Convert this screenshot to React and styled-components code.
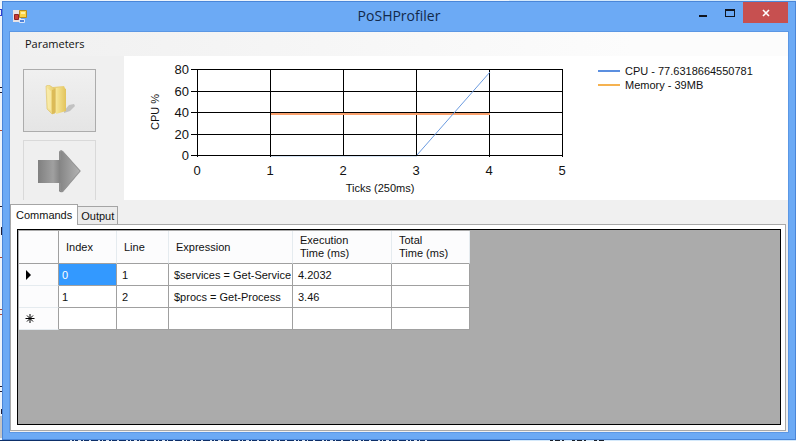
import React, { useState } from "react";
import styled, { createGlobalStyle } from "styled-components";

const GlobalStyle = createGlobalStyle`
  * { box-sizing: border-box; }
  body { margin: 0; font: 11px/14px "Liberation Sans", Arial, sans-serif; color: #111; }
  button { font: inherit; color: inherit; }
`;

const Desktop = styled.div`
  position: relative;
  min-height: 100vh;
  display: flex;
  flex-direction: column;
  padding: 1px 0 1px 2px;
  background: linear-gradient(to right, #eef4fb 0 64%, #d4e9fb 64%);
`;

const Backdrop = styled.svg`
  position: absolute;
  left: 0;
  top: 0;
  width: 100%;
  height: 100%;
`;

const Window = styled.main`
  position: relative;
  flex: 1;
  display: flex;
  flex-direction: column;
  padding: 0 7px 7px;
  background: #6caaf5;
  border: 1px solid #4a86d8;
`;

const TitleBar = styled.header`
  height: 30px;
  flex: none;
  display: grid;
  grid-template-columns: 1fr auto 1fr;
  align-items: start;
`;

const AppIcon = styled.svg`
  width: 16px;
  height: 16px;
  margin: 6px 0 0 3px;
`;

const Title = styled.h1`
  margin: 4px 0 0;
  font: 14px/20px "Open Sans", sans-serif;
  color: #12294a;
`;

const Controls = styled.div`
  display: flex;
  justify-content: flex-end;
`;

const ControlButton = styled.button`
  width: ${(p) => (p.$close ? 45 : 27)}px;
  height: 21px;
  padding: 0;
  border: 0;
  display: grid;
  place-items: center;
  background: ${(p) => (p.$close ? "#c75050" : "transparent")};
`;

const Client = styled.div`
  flex: 1;
  display: flex;
  flex-direction: column;
  background: #f0f0f0;
  outline: 1px solid #5b97e4;
`;

const MenuBar = styled.nav`
  height: 24px;
  flex: none;
  padding: 2px 10px;
  background: linear-gradient(to right, #f0f0f0, #fcfcfc 80%);
`;

const MenuItem = styled.button`
  height: 20px;
  padding: 0 5px;
  border: 0;
  background: transparent;
  font: 11px/20px "Open Sans", sans-serif;
`;

const TopPanel = styled.section`
  height: 144px;
  flex: none;
  display: flex;
  overflow: hidden;
`;

const Tools = styled.div`
  width: 114px;
  flex: none;
  display: flex;
  flex-direction: column;
  gap: 8px;
  padding: 13px 28px 0 13px;
`;

const ToolButton = styled.button`
  height: 63px;
  flex: none;
  padding: 0;
  display: grid;
  place-items: center;
  border: 1px solid #acacac;
  background: linear-gradient(#f0f0f0, #e5e5e5);
  &:disabled { border-color: #d9d9d9; background: #efefef; }
`;

const ChartPanel = styled.div`
  flex: 1;
  display: flex;
  background: #fff;
`;

const Plot = styled.svg`
  width: 456px;
  height: 144px;
  flex: none;
  font-family: "Liberation Sans", Arial, sans-serif;
`;

const Legend = styled.ul`
  list-style: none;
  margin: 8px 0 0 18px;
  padding: 0;
`;

const LegendItem = styled.li`
  display: flex;
  align-items: center;
  gap: 5px;
  white-space: nowrap;
  &::before {
    content: "";
    width: 22px;
    height: 2px;
    background: ${(p) => p.$color};
  }
`;

const TabList = styled.div`
  flex: none;
  display: flex;
  align-items: flex-end;
  padding-top: 4px;
`;

const Tab = styled.button`
  position: relative;
  height: ${(p) => (p.$active ? 21 : 18)}px;
  padding: 0 ${(p) => (p.$active ? 5 : 3)}px;
  border: 1px solid #a5a5a5;
  border-bottom: 0;
  border-left-width: ${(p) => (p.$active ? 1 : 0)}px;
  margin-bottom: ${(p) => (p.$active ? -1 : 0)}px;
  background: ${(p) => (p.$active ? "#fff" : "#ececec")};
`;

const TabPage = styled.div`
  flex: 1;
  display: flex;
  margin: 0 2px 1px 0;
  padding: 4px 4px 5px 6px;
  background: #fff;
  border: 1px solid #a9a9a9;
`;

const GridView = styled.div`
  flex: 1;
  padding: 1px;
  background: #ababab;
  border: 1px solid #000;
`;

const Table = styled.table`
  width: 451px;
  table-layout: fixed;
  border-collapse: separate;
  border-spacing: 0;
`;

const Column = styled.col`
  width: ${(p) => p.$width}px;
`;

const HeadCell = styled.th`
  height: 33px;
  padding: 0 7px;
  text-align: left;
  font-weight: normal;
  line-height: 13px;
  background: #fcfcfd;
  border-right: 1px solid ${(p) => (p.$corner ? "#a0a0a0" : "#e5ebef")};
  border-bottom: 1px solid #a0a0a0;
`;

const RowHead = styled.th`
  height: 22px;
  padding: 0 6px;
  text-align: left;
  background: #fcfcfd;
  border-right: 1px solid #a0a0a0;
  border-bottom: 1px solid #e5ebef;
  svg { display: block; }
`;

const Cell = styled.td`
  height: 22px;
  padding: 0 0 0 ${(p) => (p.$wide ? 5 : 3)}px;
  white-space: nowrap;
  color: ${(p) => (p.$selected ? "#fff" : "inherit")};
  background: ${(p) => (p.$selected ? "#3399ff" : "#fff")};
  border-right: 1px solid #a0a0a0;
  border-bottom: 1px solid #a0a0a0;
`;

const widths = [40, 58, 52, 124, 99, 78];
const rows = [
  ["0", "1", "$services = Get-Service", "4.2032", ""],
  ["1", "2", "$procs = Get-Process", "3.46", ""],
  ["", "", "", "", ""],
];

const plotLeft = 73;
const plotRight = 438;
const plotBottom = 99;
const xAt = (v) => plotLeft + v * 73;
const yAt = (v) => plotBottom - Math.floor(v * 1.08);

function Chart() {
  return (
    <Plot viewBox="0 0 456 144" role="img" aria-label="CPU and memory by tick">
      <g stroke="#000" strokeWidth="1" shapeRendering="crispEdges">
        {[0, 20, 40, 60, 80].map((v) => (
          <path key={v} d={`M${plotLeft - 6} ${yAt(v) + 0.5}H${plotRight + 1}`} />
        ))}
        {[0, 1, 2, 3, 4, 5].map((v) => (
          <path key={v} d={`M${xAt(v) + 0.5} 13V101`} />
        ))}
      </g>
      <path d="M147 58H366" fill="none" stroke="#f9a06c" strokeWidth="2" />
      <path d="M147 100.5H293" fill="none" stroke="#d5e4f4" />
      <path d="M293 99L366 16" fill="none" stroke="#6b9be0" />
      <g fontSize="13" fill="#111">
        {[0, 20, 40, 60, 80].map((v) => (
          <text key={v} x="65" y={yAt(v) + 5} textAnchor="end">{v}</text>
        ))}
        {[0, 1, 2, 3, 4, 5].map((v) => (
          <text key={v} x={xAt(v)} y="119" textAnchor="middle">{v}</text>
        ))}
      </g>
      <g fontSize="11" fill="#111" textAnchor="middle">
        <text x="256" y="136">Ticks (250ms)</text>
        <text transform="translate(35 56) rotate(-90)">CPU %</text>
      </g>
    </Plot>
  );
}

function FolderIcon() {
  return (
    <svg width="32" height="32" viewBox="0 0 32 32" aria-hidden="true">
      <defs>
        <linearGradient id="folderFront" x1="0" x2="1">
          <stop offset="0" stopColor="#f8e9a0" />
          <stop offset="1" stopColor="#e6ca68" />
        </linearGradient>
        <linearGradient id="folderInner" x1="0" x2="1">
          <stop offset="0" stopColor="#f7e798" />
          <stop offset="1" stopColor="#e2c35c" />
        </linearGradient>
      </defs>
      <path d="M20 26l5-6 5-1 1 2-5 5-6 2z" fill="#b0b0b0" opacity=".7" />
      <path d="M9 2l11-1 1 2 1 22-12 3z" fill="#e9cf78" />
      <path d="M12 3l8-1v1l2 1v22l-10 3z" fill="url(#folderInner)" />
      <path d="M2 1l3-1 6 4v24l-3 1-5-5z" fill="url(#folderFront)" stroke="#dcbf66" strokeWidth=".6" />
      <path d="M8 5l3-1v24l-3 1z" fill="#dcbb58" />
      <path d="M3 3l4 3v20l-3-3z" fill="#fbf0b8" opacity=".6" />
    </svg>
  );
}

function ArrowIcon() {
  return (
    <svg width="44" height="46" viewBox="0 0 44 46" aria-hidden="true">
      <defs>
        <linearGradient id="arrowFill" x1="0" x2="1">
          <stop offset="0" stopColor="#808080" />
          <stop offset=".35" stopColor="#a0a0a0" />
          <stop offset=".5" stopColor="#858585" />
          <stop offset="1" stopColor="#b5b5b5" />
        </linearGradient>
      </defs>
      <path d="M0 11h21V3q1-3 4-1l18 20-18 21q-3 1-4-1v-8H0z" fill="url(#arrowFill)" />
      <path d="M22 11V3q1-2 3 0l17 19-17 20q-2 1-3-1v-7" fill="none" stroke="#969696" />
    </svg>
  );
}

const marks = {
  0: <path d="M1 0l5 5-5 5z" fill="#000" />,
  2: <path d="M5 0v9M0.5 4.5h9M2 1.5l6 6M8 1.5l-6 6" stroke="#000" />,
};

export default function App() {
  const [tab, setTab] = useState("Commands");
  return (
    <Desktop>
      <GlobalStyle />
      <Backdrop aria-hidden="true" shapeRendering="crispEdges">
        <path d="M1 9v6M0 9h2M0 15h2" stroke="#2f3fd0" />
        <path d="M0 87h2M0 92h2" stroke="#20203a" />
        <path d="M0 206h2M1 227v8M0 386h2M0 391h2M1 409v5" stroke="#20203a" />
        <path d="M0 130h2M0 257h2M0 309h2M0 314h2" stroke="#b04a3a" />
        <path d="M0 416h2v22h-2z" fill="#c4c4c4" />
        <path d="M0 440.5H510" stroke="#0d2f69" />
        <path d="M70 440.5H430" stroke="#d5e3f5" strokeDasharray="2 2 1 3 3 2 1 5 2 7" />
        <path d="M550 440.5H606" stroke="#17202d" strokeDasharray="3 2 5 2 2 8" />
      </Backdrop>
      <Window>
        <TitleBar>
          <AppIcon viewBox="0 0 16 16" aria-hidden="true">
            <path d="M0 2h8v12H0z" fill="#e9e2e4" />
            <path d="M1.5 6.5h4v5h-4z" fill="#c83a36" stroke="#8c2226" />
            <path d="M6.5 2.5h7v7h-7z" fill="#fbd445" stroke="#b58a1e" />
            <path d="M8 4h4v2H8z" fill="#fff0a0" />
            <path d="M6.5 11.5h5v3h-5z" fill="#4f83dc" stroke="#dbe7f8" />
          </AppIcon>
          <Title>PoSHProfiler</Title>
          <Controls>
            <ControlButton aria-label="Minimize">
              <svg width="10" height="10"><path d="M1 7h8v2H1z" fill="#10151f" /></svg>
            </ControlButton>
            <ControlButton aria-label="Maximize">
              <svg width="10" height="8" shapeRendering="crispEdges"><path d="M0 0h10v8H0zM1 2v5h8V2z" fill="#10151f" fillRule="evenodd" /></svg>
            </ControlButton>
            <ControlButton $close aria-label="Close">
              <svg width="8" height="8"><path d="M1 1l6 6M7 1L1 7" stroke="#fff" strokeWidth="1.600" /></svg>
            </ControlButton>
          </Controls>
        </TitleBar>
        <Client>
          <MenuBar><MenuItem>Parameters</MenuItem></MenuBar>
          <TopPanel>
            <Tools>
              <ToolButton aria-label="Open script"><FolderIcon /></ToolButton>
              <ToolButton aria-label="Run" disabled><ArrowIcon /></ToolButton>
            </Tools>
            <ChartPanel>
              <Chart />
              <Legend>
                <LegendItem $color="#5b8fe0">CPU - 77.6318664550781</LegendItem>
                <LegendItem $color="#f5b250">Memory - 39MB</LegendItem>
              </Legend>
            </ChartPanel>
          </TopPanel>
          <TabList role="tablist">
            {["Commands", "Output"].map((name) => (
              <Tab key={name} role="tab" aria-selected={tab === name} $active={tab === name} onClick={() => setTab(name)}>
                {name}
              </Tab>
            ))}
          </TabList>
          <TabPage role="tabpanel">
            <GridView>
              <Table>
                <colgroup>{widths.map((w, i) => <Column key={i} $width={w} />)}</colgroup>
                <thead>
                  <tr>
                    <HeadCell $corner aria-label="Row" />
                    <HeadCell>Index</HeadCell>
                    <HeadCell>Line</HeadCell>
                    <HeadCell>Expression</HeadCell>
                    <HeadCell>Execution<br />Time (ms)</HeadCell>
                    <HeadCell>Total<br />Time (ms)</HeadCell>
                  </tr>
                </thead>
                <tbody>
                  {rows.map((row, r) => (
                    <tr key={r}>
                      <RowHead aria-label={`Row ${r + 1}`}>
                        <svg width="10" height="10" aria-hidden="true">{marks[r]}</svg>
                      </RowHead>
                      {row.map((value, c) => (
                        <Cell key={c} $wide={c > 0} $selected={r === 0 && c === 0}>{value}</Cell>
                      ))}
                    </tr>
                  ))}
                </tbody>
              </Table>
            </GridView>
          </TabPage>
        </Client>
      </Window>
    </Desktop>
  );
}
